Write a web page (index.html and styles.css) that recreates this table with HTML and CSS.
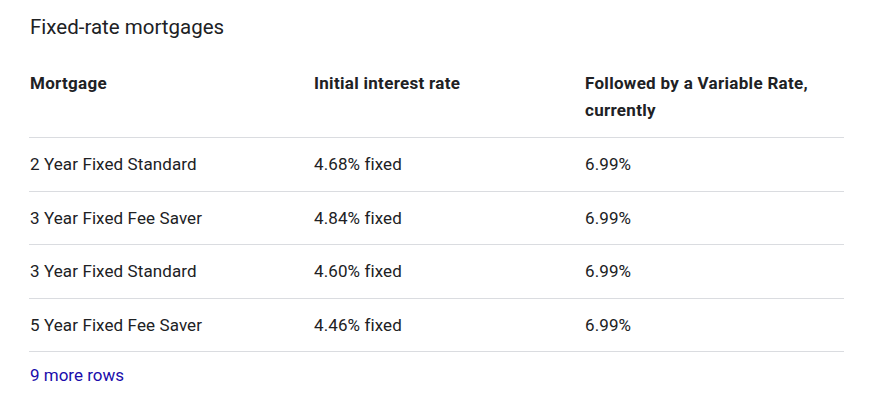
FILE: index.html
```html
<!DOCTYPE html>
<html>
<head>
<meta charset="utf-8">
<link rel="stylesheet" href="styles.css">
</head>
<body>
<div class="wrap">
  <h2 class="title">Fixed-rate mortgages</h2>
  <table class="rates">
    <colgroup>
      <col class="c1">
      <col class="c2">
      <col class="c3">
    </colgroup>
    <thead>
      <tr>
        <th>Mortgage</th>
        <th>Initial interest rate</th>
        <th>Followed by a Variable Rate, currently</th>
      </tr>
    </thead>
    <tbody>
      <tr><td>2 Year Fixed Standard</td><td>4.68% fixed</td><td>6.99%</td></tr>
      <tr><td>3 Year Fixed Fee Saver</td><td>4.84% fixed</td><td>6.99%</td></tr>
      <tr><td>3 Year Fixed Standard</td><td>4.60% fixed</td><td>6.99%</td></tr>
      <tr><td>5 Year Fixed Fee Saver</td><td>4.46% fixed</td><td>6.99%</td></tr>
    </tbody>
  </table>
  <a class="more" href="#">9 more rows</a>
</div>
</body>
</html>
```
FILE: styles.css
```css
html, body {
  margin: 0;
  padding: 0;
  background: #ffffff;
}
body {
  font-family: Roboto, "Liberation Sans", sans-serif;
  color: #202124;
}
.wrap {
  padding: 15px 43px 0 29px;
  display: flex;
  flex-direction: column;
  align-items: flex-start;
}
.title {
  margin: 0 0 0 1px;
  font-size: 20.5px;
  font-weight: 400;
  line-height: 24px;
  color: #202124;
}
.rates {
  margin-top: 31px;
  width: 815px;
  table-layout: fixed;
  border-collapse: collapse;
  font-size: 17px;
}
.rates col.c1 { width: 284px; }
.rates col.c2 { width: 271px; }
.rates col.c3 { width: 260px; }
.rates th {
  text-align: left;
  font-weight: 700;
  line-height: 27px;
  letter-spacing: 0.3px;
  padding: 0 0 13px 1px;
  vertical-align: top;
  border-bottom: 1px solid #dadce0;
}
.rates td {
  padding: 14px 0 14.5px 1px;
  line-height: 24px;
  letter-spacing: 0.1px;
  border-bottom: 1px solid #dadce0;
  color: #202124;
}
.more {
  margin: 11px 0 0 1px;
  font-size: 17px;
  line-height: 24px;
  color: #1a0dab;
  text-decoration: none;
}
```
